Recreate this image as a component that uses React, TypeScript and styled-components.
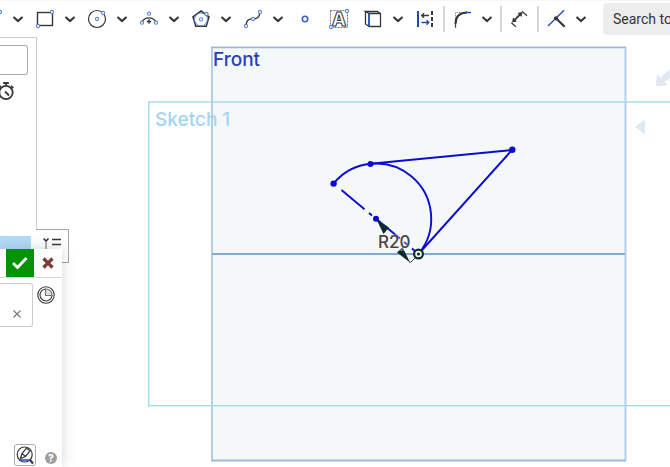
import React from 'react';
import styled, { createGlobalStyle } from 'styled-components';

const INK = '#33383b';
const BLUE = '#2347b5';
const NODE = '#5b84dc';
const SKETCH = '#0a0ccf';

const GlobalStyle = createGlobalStyle`
  *, *::before, *::after { box-sizing: border-box; }
  body { margin: 0; background: #fff; font-family: Inter, "Liberation Sans", sans-serif; }
  button, input { font: inherit; margin: 0; padding: 0; }
`;

const Page = styled.div`
  display: flex;
  flex-direction: column;
  min-height: 100vh;
  overflow: hidden;
`;

const Toolbar = styled.header`
  display: flex;
  align-items: center;
  height: 37px;
  border-top: 1px solid #f7f7f7;
  overflow: hidden;
`;

const ToolGroup = styled.div<{ $lead?: number; $trail?: number }>`
  display: flex;
  flex: none;
  margin-left: ${p => p.$lead ?? 0}px;
  margin-right: ${p => p.$trail ?? 2}px;
`;

const ToolButton = styled.button<{ $wide?: boolean }>`
  display: grid;
  flex: none;
  place-items: center;
  width: ${p => (p.$wide ? 26 : 24)}px;
  height: 24px;
  border: 0;
  background: transparent;
`;

const Glyph = styled.svg`
  display: block;
  overflow: visible;
  fill: none;
  stroke: ${INK};
  stroke-width: 1.4;
`;

const Divider = styled.span<{ $lead?: number }>`
  flex: none;
  width: 2px;
  height: 26px;
  margin-left: ${p => p.$lead ?? 6}px;
  margin-right: 5px;
  background: #d6d6d6;
`;

const ToolSearch = styled.input`
  flex: none;
  width: 200px;
  height: 32px;
  margin-left: 7px;
  padding: 0 10px;
  border: 0;
  border-radius: 4px;
  background: #ededed;
  font-family: Roboto, sans-serif;
  font-size: 14px;
  color: #33323f;
  &::placeholder { color: #33323f; opacity: 1; }
`;

const Workspace = styled.main`
  position: relative;
  display: flex;
  flex: 1;
  min-height: 430px;
`;

const FeaturePanel = styled.aside`
  display: flex;
  flex: none;
  flex-direction: column;
  align-items: flex-start;
  width: 37px;
  border-top: 1px solid #ccc;
  border-right: 1px solid #ccc;
`;

const FilterInput = styled.input`
  width: 28px;
  height: 30px;
  margin-top: 7px;
  border: 1px solid #aaa;
  border-left: 0;
  border-radius: 0 3px 3px 0;
`;

const PanelButton = styled.button`
  display: grid;
  place-items: center;
  width: 24px;
  height: 24px;
  margin: 4px 0 0 -6px;
  border: 0;
  background: transparent;
`;

const SelectedFeature = styled.div`
  width: 31px;
  height: 24px;
  margin-top: 133px;
  background: #b0dbf3;
`;

const Canvas = styled.svg`
  flex: 1;
  min-width: 0;
  overflow: hidden;
  font-family: Inter, "Liberation Sans", sans-serif;
`;

const ListTab = styled.button`
  position: absolute;
  left: 36px;
  top: 192px;
  display: grid;
  place-items: center;
  width: 33px;
  height: 34px;
  border: 1px solid #aaa5a5;
  border-left: 0;
  background: #fff;
`;

const Dialog = styled.section`
  position: absolute;
  left: 0;
  top: 212px;
  bottom: 0;
  display: flex;
  flex-direction: column;
  width: 62px;
  background: #fff;
  box-shadow: 0 0 12px rgba(50, 65, 90, 0.22);
`;

const DialogHeader = styled.div`
  display: flex;
  height: 29px;
  padding-left: 6px;
  border-bottom: 1px solid #d4d4d4;
`;

const HeaderButton = styled.button<{ $accept?: boolean }>`
  display: grid;
  place-items: center;
  width: 28px;
  height: 28px;
  border: 0;
  background: ${p => (p.$accept ? '#069206' : 'transparent')};
`;

const DialogBody = styled.div`
  display: flex;
  flex: 1;
  align-items: flex-start;
  gap: 3px;
  padding-top: 5px;
`;

const Selection = styled.div`
  display: flex;
  align-items: flex-end;
  justify-content: flex-end;
  width: 33px;
  height: 44px;
  border: 1px solid #ccc;
  border-left: 0;
  border-radius: 0 3px 3px 0;
`;

const BodyButton = styled.button`
  display: grid;
  place-items: center;
  width: 22px;
  height: 24px;
  margin-right: 4px;
  border: 0;
  background: transparent;
`;

const FinalButton = styled(BodyButton)`
  width: 20px;
  margin: 0;
`;

const DialogFooter = styled.div`
  display: flex;
  align-items: center;
  gap: 9px;
  padding: 0 0 1px 14px;
`;

const PreviewButton = styled.button`
  display: grid;
  place-items: center;
  width: 22px;
  height: 22px;
  border: 1px solid #aaa;
  border-radius: 3px;
  background: #fff;
`;

const HelpButton = styled.button`
  display: grid;
  place-items: center;
  width: 12px;
  height: 12px;
  margin-top: 5px;
  border: 0;
  border-radius: 50%;
  background: #a19b9b;
  color: #fff;
  font-size: 10px;
  font-weight: 800;
  line-height: 12px;
`;

const Tool = ({ label, children }: { label: string; children: React.ReactNode }) => (
  <ToolButton aria-label={label}>
    <Glyph width="24" height="24" viewBox="0 0 24 24">{children}</Glyph>
  </ToolButton>
);

const Menu = ({ label }: { label: string }) => (
  <ToolButton $wide aria-label={label}>
    <Glyph width="12" height="12" viewBox="0 0 12 12">
      <path d="M1.5 4 6 8 10.5 4" strokeWidth="2.1" />
    </Glyph>
  </ToolButton>
);

const Nodes = ({ at }: { at: [number, number][] }) => (
  <g stroke={NODE} strokeWidth="1.1" fill="#fff">
    {at.map(([x, y]) => <circle key={`${x}-${y}`} cx={x} cy={y} r="1.6" />)}
  </g>
);

function SketchToolbar() {
  return (
    <Toolbar>
      <ToolGroup $lead={-19}>
        <Tool label="Line"><path d="M5 19 19 5" /><Nodes at={[[5, 19], [19, 5]]} /></Tool>
        <Menu label="Line tools" />
      </ToolGroup>
      <ToolGroup>
        <Tool label="Corner rectangle">
          <rect x="4.5" y="5.5" width="15" height="13" />
          <Nodes at={[[19, 5], [5, 19]]} />
        </Tool>
        <Menu label="Rectangle tools" />
      </ToolGroup>
      <ToolGroup>
        <Tool label="Center point circle">
          <circle cx="12" cy="12" r="8.5" strokeWidth="1.2" />
          <Nodes at={[[12, 12], [18, 6]]} />
        </Tool>
        <Menu label="Circle tools" />
      </ToolGroup>
      <ToolGroup>
        <Tool label="3 point arc">
          <path d="M5 15.5A7.6 7.6 0 0 1 19 15.5" />
          <path d="M12 12.3v4.4M9.8 14.5h4.4" />
          <Nodes at={[[5, 15.7], [12, 6.7], [19, 15.7]]} />
        </Tool>
        <Menu label="Arc tools" />
      </ToolGroup>
      <ToolGroup>
        <Tool label="Polygon">
          <path d="M12 4 20 9.8 17.2 19.3H6.8L4 9.8Z" strokeWidth="1.6" />
          <circle cx="12" cy="12.4" r="6.5" stroke={NODE} strokeWidth="1" />
          <Nodes at={[[12, 12.4], [17.5, 7]]} />
        </Tool>
        <Menu label="Polygon tools" />
      </ToolGroup>
      <ToolGroup>
        <Tool label="Spline">
          <path d="M5 18.5C6 11 9 12.5 12 12S18 12 19 5.5" />
          <Nodes at={[[5, 19], [12, 12], [19, 5]]} />
        </Tool>
        <Menu label="Spline tools" />
      </ToolGroup>
      <Tool label="Point"><circle cx="12" cy="12" r="2.7" stroke="#3763cf" strokeWidth="1.6" /></Tool>
      <ToolGroup $lead={10} $trail={10}>
        <Tool label="Text">
          <rect x="3.5" y="3.5" width="17" height="17" strokeWidth="1" strokeDasharray="2 1" stroke="#777" />
          <text x="12" y="19" textAnchor="middle" fontFamily="Inter" fontSize="19" fontWeight="800" fill="#fff" strokeWidth="1">A</text>
          <Nodes at={[[20, 4], [4, 20]]} />
        </Tool>
      </ToolGroup>
      <ToolGroup>
        <Tool label="Use">
          <path d="M8 6.5H19.5V19.5H8M8 6.5 4.5 4.5H16.5L19.5 6.5M4.5 4.5V17L8 19.5" strokeWidth="1.3" />
          <path d="M8 6.5V19.5" stroke={BLUE} strokeWidth="1.8" />
        </Tool>
        <Menu label="Use tools" />
      </ToolGroup>
      <Tool label="Mirror">
        <path d="M5 4V20" stroke={BLUE} strokeWidth="2" />
        <path d="M19 4V20" strokeWidth="2" strokeDasharray="4 2" />
        <path d="M16 8.5H9M11 6.3 8.7 8.5 11 10.7" strokeWidth="1.3" />
        <path d="M8.5 15.5H15.5M13.5 13.3 15.8 15.5 13.5 17.7" stroke={BLUE} strokeWidth="1.3" />
      </Tool>
      <Divider />
      <ToolGroup $trail={0}>
        <Tool label="Fillet">
          <path d="M5.5 12V5.5H13" strokeWidth="1" strokeDasharray="1.5 1" stroke="#888" />
          <path d="M5.5 17C5.5 10 9.5 5.8 17 5.6" strokeWidth="2" />
          <path d="M5.5 17V20.7M16 5.5H21" stroke={BLUE} strokeWidth="1.3" />
        </Tool>
        <Menu label="Fillet tools" />
      </ToolGroup>
      <Divider $lead={0} />
      <Tool label="Dimension">
        <path d="M7 13.7 13.5 7" strokeWidth="1.8" />
        <path d="M5 15.5 6 10.5 10 14.5ZM15.5 5 10.5 6 14.5 10Z" fill={INK} stroke="none" />
        <path d="M4.3 15.7 9 19.8M15 4.3 20 8.7" strokeWidth="1.2" />
      </Tool>
      <Divider />
      <ToolGroup>
        <Tool label="Trim">
          <path d="M4 19 20 3.3" stroke={BLUE} strokeWidth="1.3" />
          <path d="M12 11.3 20.7 19.8" strokeWidth="2.2" />
          <circle cx="12" cy="11.3" r="2.1" fill={INK} stroke="none" />
        </Tool>
        <Menu label="Trim tools" />
      </ToolGroup>
      <ToolSearch type="search" aria-label="Search tools" placeholder="Search tools..." />
    </Toolbar>
  );
}

/* Drawing coordinates are in model view space; the group shifts them under the toolbar and panel. */
function SketchCanvas() {
  return (
    <Canvas role="img" aria-label="Front plane with Sketch 1">
      <g transform="translate(-37 -37)" fill="none">
        <rect x="212" y="47" width="413.5" height="413.5" fill="#f4f8f9" />
        <path d="M212 47V460.5M625.5 47V460.5" stroke="#b6cde8" strokeWidth="2" />
        <path d="M211 47.3H626M211 460.5H626" stroke="#9db9de" strokeWidth="1.8" />
        <rect x="148.7" y="102" width="4000" height="303.7" stroke="#a5d8f1" strokeWidth="1.4" />
        <path d="M212 254H625" stroke="#86a9d4" strokeWidth="2" />
        <text x="213" y="66" fontSize="19" fontWeight="500" fill="#2840bb">Front</text>
        <text x="155" y="126" fontSize="19" fontWeight="500" fill="#a3d4f2">Sketch 1</text>

        <g stroke={SKETCH} strokeWidth="1.9">
          <path d="M333.6 183.5A55 55 0 0 1 418.5 254" />
          <path d="M370.5 163.7 512 150 418.5 254" />
          <path d="M341.5 190 364.5 209.2M369 212.9 372 215.4M376 218.7 400 238.6M404 242 407 244.5M412 248.5 418 253.5" />
        </g>
        <g fill={SKETCH}>
          <circle cx="333.6" cy="183.6" r="3.2" />
          <circle cx="370.5" cy="163.9" r="3" />
          <circle cx="512.3" cy="149.8" r="3.2" />
          <circle cx="376" cy="218.8" r="3" />
        </g>
        <path d="M376.5 219.5 389 227.5 383.5 234ZM410 262.5 397 252.5 402.5 247Z" fill="#0c2b30" />
        <path d="M409 262H411L416 257" stroke="#4b4b4f" />
        <rect x="378" y="234" width="33" height="17" fill="#f4f8f9" fillOpacity="0.3" />
        <text x="378" y="248" fontSize="17" fontWeight="500" fill="#4a4446">R20</text>
        <circle cx="418.5" cy="254" r="4.4" fill="#f4f8f9" stroke="#0f2f2b" strokeWidth="2.2" />
        <circle cx="418.5" cy="254" r="1.6" fill="#0f2f2b" />

        <path d="M635 127 645 119.5V134.5Z" fill="#dfe8f3" />
        <path d="M656 86 657 74 660.5 77.5 670 69V78L664.5 82 668 85.5Z" fill="#dfe8f3" />
      </g>
    </Canvas>
  );
}

function SketchDialog() {
  return (
    <Dialog aria-label="Sketch">
      <DialogHeader>
        <HeaderButton $accept aria-label="Accept">
          <Glyph width="16" height="14" viewBox="0 0 16 14">
            <path d="M1 7 5.5 11.5 14.5 2" stroke="#fff" strokeWidth="2.8" />
          </Glyph>
        </HeaderButton>
        <HeaderButton aria-label="Cancel">
          <Glyph width="12" height="12" viewBox="0 0 12 12">
            <path d="M1.5 1.5 10.5 10.5M10.5 1.5 1.5 10.5" stroke="#7b3d3b" strokeWidth="3.2" />
          </Glyph>
        </HeaderButton>
      </DialogHeader>
      <DialogBody>
        <Selection>
          <BodyButton aria-label="Clear selection">
            <Glyph width="8" height="8" viewBox="0 0 8 8">
              <path d="M.5 .5 7.5 7.5M7.5 .5 .5 7.5" stroke="#7c7880" strokeWidth="1.3" />
            </Glyph>
          </BodyButton>
        </Selection>
        <FinalButton aria-label="Final view">
          <Glyph width="18" height="18" viewBox="0 0 18 18">
            <circle cx="9" cy="9" r="8.2" strokeWidth="1.1" />
            <path d="M8.5 3A6 6 0 1 0 15 9.5H8.5Z" strokeWidth="1.1" fill="#fff" />
            <path d="M8.5 3A6 6 0 0 1 15 9.5H8.5Z" fill="#ddd" stroke="#777" strokeWidth="1.1" />
          </Glyph>
        </FinalButton>
      </DialogBody>
      <DialogFooter>
        <PreviewButton aria-label="Preview sketch">
          <Glyph width="18" height="18" viewBox="0 0 18 18">
            <circle cx="8.7" cy="8.5" r="7.5" strokeWidth="1.2" />
            <path d="M14 14 17 17.5" strokeWidth="2.2" />
            <path d="M4.5 12.5 6 7.5 10.5 2 14 5 9.5 10.5ZM6 7.5 9.5 10.5" fill="#fff" strokeWidth="1.2" />
            <path d="M3 14H14" stroke={BLUE} strokeWidth="1.5" />
          </Glyph>
        </PreviewButton>
        <HelpButton aria-label="Help">?</HelpButton>
      </DialogFooter>
    </Dialog>
  );
}

export default function App() {
  return (
    <Page>
      <GlobalStyle />
      <SketchToolbar />
      <Workspace>
        <FeaturePanel>
          <FilterInput aria-label="Filter features" />
          <PanelButton aria-label="Regeneration times">
            <Glyph width="18" height="20" viewBox="0 0 18 20">
              <circle cx="9" cy="11.5" r="6.7" strokeWidth="1.8" />
              <path d="M6.2 2H11.8M9 2V5M14 5 16.3 7.2M4 5 2 7" strokeWidth="1.8" />
              <path d="M8 10.5 12 14.5" strokeWidth="1.8" />
            </Glyph>
          </PanelButton>
          <SelectedFeature />
        </FeaturePanel>
        <SketchCanvas />
        <ListTab aria-label="Feature list">
          <Glyph width="24" height="20" viewBox="0 0 24 20">
            <path d="M12 3.5H21M12 8.5H21" strokeWidth="1.3" />
            <path d="M3.5 2.5 6 5 8.5 2.5" strokeWidth="1.6" />
            <path d="M6 6V14" stroke="#999" strokeWidth="1.6" />
          </Glyph>
        </ListTab>
        <SketchDialog />
      </Workspace>
    </Page>
  );
}
